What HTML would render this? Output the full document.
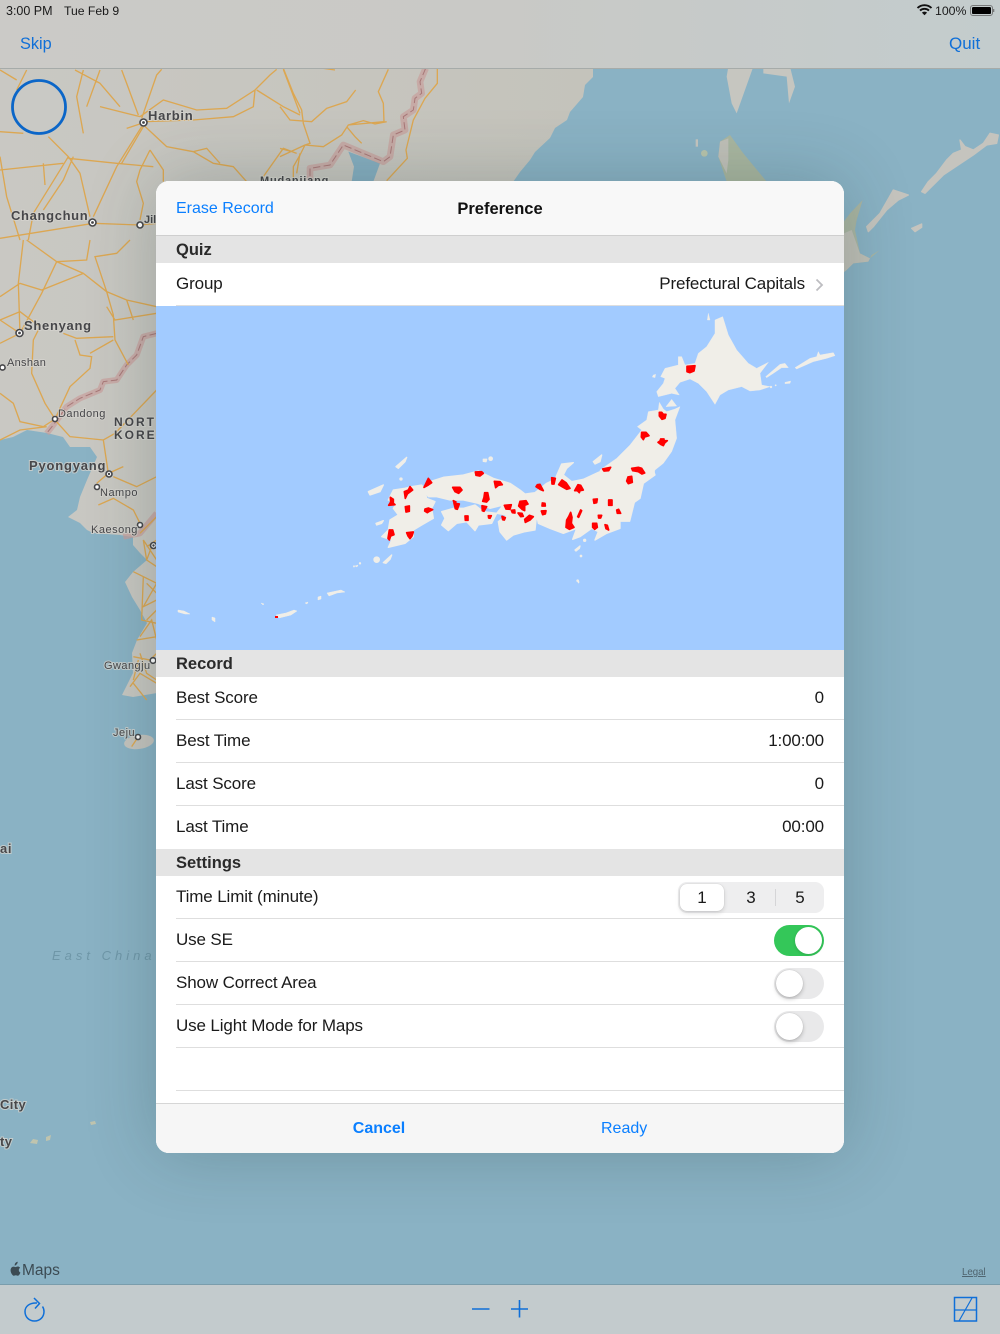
<!DOCTYPE html>
<html><head><meta charset="utf-8"><title>Preference</title>
<style>
html,body{margin:0;padding:0;width:1000px;height:1334px;overflow:hidden;background:#8ab2c4}
body{position:relative;font-family:"Liberation Sans",sans-serif;color:#111}
.a{position:absolute}
.r{position:absolute;left:176px;width:648px;height:42px;line-height:42px;font-size:17px;letter-spacing:-.13px;color:#1a1a1a;white-space:nowrap}
.r b{font-weight:normal;position:absolute;right:0;top:0}
.s{position:absolute;left:156px;padding-left:20px;width:668px;height:27px;line-height:28px;background:#e4e4e4;font-size:16.5px;font-weight:bold;color:#2a2a2a}
.l{position:absolute;left:176px;width:668px;height:1px;background:#dedede}
.tg{position:absolute;left:774px;width:50px;height:31px;border-radius:16px;background:#e9e9ea}
.tg i{position:absolute;left:2px;top:2px;width:27px;height:27px;border-radius:50%;background:#fff;box-shadow:0 2px 4px rgba(0,0,0,.22),0 0 1px rgba(0,0,0,.22)}
.tg.on{background:#34c759}.tg.on i{left:21px;box-shadow:0 1px 3px rgba(0,0,0,.15)}
.n{position:absolute;top:882px;height:31px;line-height:31px;width:44px;text-align:center;font-size:17px;color:#1a1a1a}
svg text.m{font-family:"Liberation Sans",sans-serif;font-weight:bold;fill:#47474a;stroke:#d5d4cf;stroke-width:2px;paint-order:stroke;stroke-opacity:.75}
</style></head><body>

<svg class="a" style="left:0;top:0;filter:blur(.35px)" width="1000" height="1334" viewBox="0 0 1000 1334">
<defs><linearGradient id="ld" x1="0" y1="0" x2="1" y2="0"><stop offset="0" stop-color="#c9c8c3"/><stop offset="1" stop-color="#c4c3bb"/></linearGradient></defs>
<rect width="1000" height="1334" fill="#8ab2c4"/>
<polygon fill="url(#ld)" points="0,60 593,60 593,77 585,85 583,97 570,112 567,120 555,128 550,138 535,152 530,160 520,172 513,182 513,693 157,693 133,697 122,695 133,673 132,653 137,640 147,623 140,610 132,597 125,582 133,572 147,560 140,553 133,545 133,537 120,535 93,533 87,530 80,523 68,517 77,510 80,497 87,480 97,457 90,447 70,447 63,437 47,433 27,430 13,437 0,440"/>
<ellipse cx="139" cy="742" rx="15" ry="7" fill="#c5c4be" transform="rotate(-8 139 742)"/>

<g transform="translate(280,60) scale(.33333)">
<path d="M205 275L300 310L280 365L215 365L222 320Z" fill="#86aec0"/>
<path d="M1345 20L1420 20L1395 90L1370 160L1355 130L1340 50Z M1450 20L1450 40L1520 50L1527 130L1545 80L1535 40L1530 20Z" fill="#c6c6c0"/>
<path d="M1350 225L1390 280L1460 365L1340 365L1315 290L1320 245Z" fill="#a9b6a0"/>
<path d="M1345 235L1320 245L1315 290L1340 340L1345 300Z" fill="#c0c0b8"/>
<ellipse cx="1273" cy="280" rx="10" ry="10" fill="#b8c4ac"/><rect x="1247" y="238" width="7" height="22" fill="#c6c6c0"/>
<path d="M437 25L420 65L425 100L405 115L400 150L370 170L375 210L340 225L330 290L310 305L190 255L150 315L90 325L90 362" fill="none" stroke="#c79c9a" stroke-opacity=".65" stroke-width="20" stroke-linejoin="round"/>
<path d="M437 25L420 65L425 100L405 115L400 150L370 170L375 210L340 225L330 290L310 305L190 255L150 315L90 325L90 362" fill="none" stroke="#a87878" stroke-width="3" stroke-dasharray="22 10"/>
<g fill="none" stroke="#dca752" stroke-width="4">
<path d="M10 25L40 100L65 150L70 190L90 250L75 255L0 290M0 140L30 180L95 185L140 145L200 125L227 90M325 28L295 95L310 130L312 185L205 195L185 225L130 260L75 255M200 200L225 230L245 250M472 25L472 70L435 115L400 180L378 270L382 295L320 362M60 285L75 255M40 362L40 320L60 285M130 25L165 30M0 265L35 275M205 195L250 182L285 192L320 185"/>
</g>
</g>

<g transform="scale(.33333)" fill="none" stroke="#dca752" stroke-width="4">
<path d="M0 210L50 240M80 210L50 270M415 345L380 250L365 210M425 355L470 225L485 208M300 320L420 350M420 350L490 300L590 330L680 325L765 270L810 225L830 208M430 365L580 360L700 350L760 320L765 270M380 385L425 370L500 440L580 455L640 490L700 500L740 545M425 380L350 500L280 650M430 380L365 490M450 450L420 510L410 545L430 610L420 660M450 450L490 510L490 545M225 210L300 250L360 320M250 210L230 290L250 400M300 210L260 320M145 410L205 470L240 520L270 650M205 470L100 640L85 720M205 475L350 490L460 500M0 510L190 490M130 490L135 555M0 470L20 590L60 720M0 395L70 400M0 715L280 670L420 675L470 670M770 270L850 320L900 345M850 208L900 340M580 455L620 445L660 490M790 530L850 445L890 460M890 520L900 460M220 470L190 540L130 630"/>
</g>
<g transform="translate(0,240) scale(.33333)">
<path d="M470 280L430 290L410 345L380 375L350 420L310 425L300 450L240 475L200 500L160 555L140 580M470 820L420 880L370 890" fill="none" stroke="#c79c9a" stroke-opacity=".65" stroke-width="18" stroke-linejoin="round"/>
<path d="M470 280L430 290L410 345L380 375L350 420L310 425L300 450L240 475L200 500L160 555L140 580" fill="none" stroke="#a87878" stroke-width="3" stroke-dasharray="22 10"/>
<g fill="none" stroke="#dca752" stroke-width="4">
<path d="M70 0L55 130L60 280M170 65L125 160L60 280M0 170L60 130L125 150L250 100L320 155L380 180L470 200M80 0L170 65L250 100L320 155L340 225L345 300L385 375M270 0L260 60L170 65M390 0L350 40L285 50L320 155M320 200L345 240L470 220M60 280L0 240L60 215L120 260L100 300L95 400L135 490L165 537M60 280L0 310M190 280L230 295L340 290M225 300L240 345L275 350L270 385L210 440L165 537M340 300L270 340M0 460L40 490L60 545L130 560L165 537M0 600L60 570L140 560M165 540L210 590L310 600L345 580L470 450M310 600L325 700L290 730M325 700L370 680M340 710L410 740L470 710M295 795L340 775L400 810L420 850M380 180L400 240M470 830L420 880M430 900L470 960M440 920L470 900"/>
</g></g>
<g transform="translate(0,540) scale(.33333)" fill="none" stroke="#dca752" stroke-width="4">
<path d="M430 0L440 60L470 80M455 20L440 60M400 95L470 130L430 200L470 180M430 110L425 240L470 250M420 290L455 240L470 300M440 240L470 210M410 300L470 290M400 350L450 360L470 340M420 340L440 400L470 420M390 440L420 400L470 430M400 430L440 480M395 620L415 590M415 360L400 420M440 130L470 160"/>
</g>

<g transform="translate(840,0) scale(.33333)">
<path d="M0 680L30 640L68 600L50 660L45 690L60 760L90 775L120 750L95 765L85 785L40 790L20 810L-5 830Z" fill="#aab5a2"/>
<path d="M0 705L35 690L60 760L90 775L85 785L40 790L20 810L0 825Z" fill="#bfbfb6"/>
<path d="M80 680L120 640L160 570L205 585L175 600L140 630L100 680L85 695Z M245 575L265 545L290 520L320 480L340 460L365 450L360 420L375 440L400 450L430 430L450 400L475 405L470 430L440 435L400 465L355 495L310 525L270 565L255 580Z M215 685L245 672L245 682L225 695Z" fill="#c5c4be" stroke="#c5c4be" stroke-width="4" stroke-linejoin="round"/>
</g>
<path d="M90 1122l5-1 1 3-5 1zM30 1143l3-4 5 1-1 4zM46 1137l5-2-1 5-4 1z" fill="#c0c4ae"/>

<g fill="#fff" stroke="#47474a" stroke-width="1.6">
<circle cx="143.500" cy="122.500" r="3.500"/><circle cx="92.500" cy="222.500" r="3.500"/><circle cx="140" cy="225" r="3"/><circle cx="19.500" cy="333" r="3.500"/><circle cx="2.500" cy="367.500" r="2.600"/><circle cx="55" cy="419" r="2.500"/><circle cx="109" cy="474" r="3"/><circle cx="97" cy="487" r="2.500"/><circle cx="140" cy="525" r="2.500"/><circle cx="153.500" cy="545.500" r="3"/><circle cx="153" cy="660.500" r="2.800"/><circle cx="138" cy="737" r="2.500"/>
</g>
<g fill="#47474a"><circle cx="143.500" cy="122.500" r="1.400"/><circle cx="92.500" cy="222.500" r="1.400"/><circle cx="19.500" cy="333" r="1.400"/><circle cx="109" cy="474" r="1.200"/><circle cx="153.500" cy="545.500" r="1.200"/></g>

<text class="m" x="148" y="120" font-size="13" letter-spacing=".7">Harbin</text>
<text class="m" x="260" y="184" font-size="11" letter-spacing=".8">Mudanjiang</text>
<text class="m" x="11" y="220" font-size="13" letter-spacing=".65">Changchun</text>
<text class="m" x="144" y="223" font-size="11">Jil</text>
<text class="m" x="24" y="330" font-size="13" letter-spacing=".7">Shenyang</text>
<text class="m" x="7" y="366" font-size="11" letter-spacing=".3" style="font-weight:normal">Anshan</text>
<text class="m" x="58" y="417" font-size="11" letter-spacing=".45" style="font-weight:normal">Dandong</text>
<text class="m" x="114" y="426" font-size="12" letter-spacing="2">NORT</text>
<text class="m" x="114" y="439" font-size="12" letter-spacing="2">KORE.</text>
<text class="m" x="29" y="470" font-size="13" letter-spacing=".8">Pyongyang</text>
<text class="m" x="100" y="496" font-size="11" letter-spacing=".5" style="font-weight:normal">Nampo</text>
<text class="m" x="91" y="533" font-size="11" letter-spacing=".5" style="font-weight:normal">Kaesong</text>
<text class="m" x="104" y="669" font-size="11" letter-spacing=".45" style="font-weight:normal">Gwangju</text>
<text class="m" x="113" y="736" font-size="11" letter-spacing=".5" style="font-weight:normal">Jeju</text>
<text class="m" x="0" y="853" font-size="13" letter-spacing=".6">ai</text>
<text x="52" y="960" font-size="13" font-style="italic" letter-spacing="4" fill="#6f97a8" font-family="Liberation Sans">East China</text>
<text class="m" x="0" y="1109" font-size="13" letter-spacing=".4">City</text>
<text class="m" x="0" y="1146" font-size="13" letter-spacing=".4">ty</text>

<path d="M16.500 1264.500c.8-.9 1.300-1.700 1.200-2.800-1 .1-2 .7-2.500 1.600-.4.800-.6 1.400-.5 2.300.7 0 1.300-.4 1.800-1.100zM18.800 1270c0-1.500 1.200-2.200 1.300-2.300-.7-1-1.800-1.200-2.200-1.200-.9-.1-1.800.6-2.300.6s-1.200-.5-2-.5c-1 0-2 .6-2.500 1.500-1.100 1.900-.3 4.600.8 6.100.5.700 1.100 1.500 1.900 1.500.8 0 1.100-.5 2-.5s1.200.5 2 .5 1.300-.7 1.800-1.500c.6-.8.800-1.600.8-1.700 0 0-1.600-.6-1.600-2.500z" fill="#3c4b53"/>
<text x="22" y="1275" font-size="15.500" fill="#3c4b53" font-family="Liberation Sans">Maps</text>
<text x="962" y="1275" font-size="9.700" fill="#4e636d" text-decoration="underline" font-family="Liberation Sans">Legal</text>
</svg>

<!-- top bar -->
<div class="a" style="left:0;top:0;width:1000px;height:68px;background:linear-gradient(90deg,#cbcac7 0,#c9c9c6 50%,#c3cccd 100%);border-bottom:1px solid #a6aba9"></div>
<div class="a" style="left:6px;top:3px;font-size:12.500px;line-height:16px;color:#1a1a1a;white-space:nowrap">3:00 PM</div>
<div class="a" style="left:64px;top:3px;font-size:12.200px;line-height:16px;color:#1a1a1a;white-space:nowrap">Tue Feb 9</div>
<div class="a" style="left:935px;top:3px;font-size:12.300px;line-height:16px;color:#1a1a1a;white-space:nowrap">100%</div>
<svg class="a" style="left:915px;top:3px" width="80" height="14" viewBox="0 0 80 14">
<path d="M2.500 5A10 10 0 0 1 16.500 5M5 7.600A6.500 6.500 0 0 1 14 7.600" fill="none" stroke="#111" stroke-width="1.900"/><path d="M6.900 9.600A3.800 3.800 0 0 1 12.100 9.600L9.500 12.300Z" fill="#111"/>
<rect x="55.500" y="2.500" width="22" height="10" rx="2.500" fill="none" stroke="#77797a"/><rect x="57" y="4" width="19" height="7" rx="1.300" fill="#000"/><rect x="78" y="6" width="1.300" height="3" fill="#77797a"/>
</svg>
<div class="a" style="left:20px;top:34px;font-size:16.300px;line-height:20px;color:#0f6fd8">Skip</div>
<div class="a" style="left:949px;top:34px;font-size:17px;line-height:20px;color:#0f6fd8">Quit</div>
<svg class="a" style="left:8px;top:76px" width="62" height="62"><circle cx="31" cy="31" r="26.500" fill="#c9c9c5" stroke="#0b66c8" stroke-width="2.800"/></svg>

<!-- bottom bar -->
<div class="a" style="left:0;top:1284px;width:1000px;height:50px;background:#c3cbcd;border-top:1px solid #7a9dac;box-sizing:border-box"></div>
<svg class="a" style="left:0;top:1285px" width="1000" height="49" viewBox="0 1285 1000 49" fill="none" stroke="#0f6fd8">
<path d="M37 1303C29.500 1302.500 25 1306.500 25 1311.500C25 1317 29 1321 34.500 1321C40 1321 44 1317 44 1311.500C44 1309.500 43.500 1308 42.500 1306.500" stroke-width="1.500"/>
<path d="M34 1298L39.500 1303.500L35 1308.500" stroke-width="1.500"/>
<path d="M472 1309H489.500M511 1309H528M519.500 1300V1317.500" stroke-width="1.600"/>
<rect x="954.500" y="1297.500" width="22" height="23.500" stroke-width="1.500"/>
<path d="M955 1310H976M972 1298L959 1321" stroke-width="1.200"/>
</svg>

<!-- modal -->
<div class="a" style="left:156px;top:181px;width:688px;height:972px;border-radius:13px;background:#fff;box-shadow:0 0 70px rgba(20,50,50,.24)"></div>
<div class="a" style="left:156px;top:181px;width:688px;height:972px;border-radius:13px;overflow:hidden;background:#fff">
<div class="a" style="left:0;top:0;width:688px;height:54px;background:#f8f8f8;border-bottom:1px solid #cfcfcf"></div>
<div class="a" style="left:0;bottom:0;width:688px;height:49px;background:#f6f6f6;border-top:1px solid #d6d6d6"></div>
</div>
<div class="a" style="left:176px;top:199px;font-size:16px;line-height:20px;color:#0a7fff;white-space:nowrap">Erase Record</div>
<div class="a" style="left:156px;top:199px;width:688px;text-align:center;font-size:16.500px;line-height:20px;font-weight:bold;color:#111">Preference</div>

<div class="s" style="top:236px">Quiz</div>
<div class="r" style="top:263px">Group<b style="right:19px">Prefectural Capitals</b></div>
<svg class="a" style="left:815px;top:278px" width="10" height="14"><path d="M1.500 1.500L7 7L1.500 12.500" fill="none" stroke="#bdbdc1" stroke-width="1.800"/></svg>
<div class="l" style="top:305px"></div>

<svg class="a" style="left:156px;top:306px;filter:blur(.3px)" width="688" height="344" viewBox="156 306 688 344">
<rect x="150" y="300" width="700" height="356" fill="#a2cbff"/>
<g fill="#f0eee8" stroke="#f0eee8" stroke-width="1.200" stroke-linejoin="round">
<g transform="translate(600,305) scale(.33333)">
<path d="M345 45L368 35L385 90L410 135L445 175L470 190L505 172L480 205L485 240L510 245L480 255L450 258L425 245L385 255L360 270L345 298L320 260L295 235L270 222L240 232L225 250L238 270L215 265L175 275L170 260L190 235L195 220L182 215L195 190L235 180L235 155L245 155L255 180L285 175L295 145L320 125L345 85Z"/>
<path d="M497 215L540 178L555 175L565 188L545 188L520 205L500 218ZM585 188L630 160L650 155L655 140L660 150L700 143L705 152L680 160L640 170L590 192ZM555 232L572 228L570 235L555 236ZM325 25L330 45L322 45ZM160 210L167 208L165 218L157 216Z"/>
<circle cx="513" cy="246" r="3"/><circle cx="527" cy="241" r="2"/>
<path d="M0 495L50 460L90 420L125 375L112 365L140 345L145 320L175 315L178 292L190 312L200 320L225 312L240 305L225 345L230 400L215 440L190 475L165 495L160 515L125 520L120 560L105 590L90 650L0 650Z"/>
<path d="M198 305L215 283L230 303Z"/>
</g>
<g transform="translate(350,440) scale(.33333)" stroke-width="4">
<path d="M222 150L240 125L280 112L340 105L385 93L430 115L480 130L510 150L525 162L555 158L590 130L615 118L625 95L635 72L670 68L650 85L640 105L665 125L700 118L745 97L790 80L850 60L900 60L915 105L880 130L870 175L835 200L810 225L810 265L770 280L735 300L745 275L725 265L690 290L668 298L680 265L640 280L600 265L565 250L560 225L555 270L525 275L490 285L470 300L450 275L445 245L470 225L440 220L460 195L420 205L385 190L340 180L300 180L260 170L235 170Z"/>
<path d="M275 215L310 205L340 205L375 195L400 215L425 218L440 220L425 250L385 255L375 272L350 245L320 250L295 272L275 255L285 235Z"/>
<path d="M185 140L215 135L225 150L230 175L255 185L245 205L250 235L215 255L190 270L190 290L165 310L115 322L125 300L95 290L115 270L120 240L145 225L130 205L140 190L115 180L130 150L165 145Z"/>
<path d="M138 80L170 52L165 65L145 85ZM55 155L100 135L90 155L60 165ZM100 368L125 345L120 358L108 370ZM730 65L755 45L750 65L735 72ZM78 250L100 242L95 250L80 255ZM400 58L410 58L408 65L400 64Z"/>
<circle cx="80" cy="359" r="8"/><circle cx="422" cy="56" r="5"/><circle cx="153" cy="117" r="3"/><circle cx="704" cy="301" r="3"/><circle cx="683" cy="422" r="2"/><circle cx="693" cy="348" r="2"/><circle cx="30" cy="370" r="1.500"/><circle cx="12" cy="379" r="1"/>
<path d="M675 330L690 318L688 325L678 333Z"/>
</g>
<path d="M178 610l6 1 6 3-5 0-7-2zM212 617l3 1 0 4-3-2zM261 603l3 1-1 1zM276 615l10-2 8-3 3 1-6 4-12 3zM318 597l3-1 0 3-3 1zM327 593l14-3 4 2-8 1-8 3zM355 566l3-1-1 2zM305 603l3-1-1 2zM578 581h1v2h-1z" stroke-width=".5"/>
</g>
<path d="M275 616l3 0 0 2-3 0z" fill="#f00"/>
<g fill="#f00" stroke="#f00" stroke-width="5" stroke-linejoin="round">
<g transform="translate(600,305) scale(.33333)">
<path d="M261 184L285 182L282 198L270 203L261 200Z"/>
<path d="M178 322L185 322L190 328L198 328L195 340L186 343L178 333Z"/>
<path d="M125 382L138 382L147 392L134 396L130 404L124 396Z"/>
<path d="M182 402L192 402L192 407L202 407L194 414L190 422L182 418L174 412L180 408Z"/>
<path d="M84 516L95 514L97 532L85 536L80 528Z"/>
<path d="M95 490L115 487L125 490L134 504L126 507L115 500L98 497Z"/>
<path d="M8 492L32 487L26 497L12 498Z"/>
</g>
<g transform="translate(350,440) scale(.33333)">
<path d="M376 96L395 95L400 100L390 108L378 106Z"/>
<path d="M433 124L450 125L457 134L445 136L437 143Z"/>
<path d="M308 142L330 142L336 150L326 160L315 155Z"/>
<path d="M404 158L413 158L417 178L410 186L398 184L402 172Z"/>
<path d="M235 115L245 128L235 135L222 142Z"/>
<path d="M163 155L175 150L180 140L188 150L172 162L166 175Z"/>
<path d="M121 172L130 178L130 190L135 194L116 196L122 186Z"/>
<path d="M166 200L178 198L178 214L168 216Z"/>
<path d="M225 207L235 204L248 209L238 214L232 218L224 213Z"/>
<path d="M312 190L328 192L322 208L316 206Z"/>
<path d="M396 197L410 200L402 214L397 212Z"/>
<path d="M345 228L354 228L354 241L346 241Z"/>
<path d="M415 227L424 227L420 235L416 234Z"/>
<path d="M456 229L466 233L463 240L458 239Z"/>
<path d="M463 196L484 194L480 208L468 207Z"/>
<path d="M510 184L528 182L534 192L524 196L524 212L516 208L506 198Z"/>
<path d="M484 211L494 210L495 219L487 218Z"/>
<path d="M504 219L516 220L520 229L512 230Z"/>
<path d="M538 226L550 230L540 240L526 247L524 238Z"/>
<path d="M577 189L585 190L586 198L576 198Z"/>
<path d="M574 213L588 212L586 222L578 224Z"/>
<path d="M562 134L570 133L580 152L570 148L558 140Z"/>
<path d="M605 113L616 115L612 132L606 132Z"/>
<path d="M636 120L648 128L660 145L650 148L636 140L626 134Z"/>
<path d="M684 134L692 136L700 150L690 152L688 158L682 152L674 152Z"/>
<path d="M730 178L742 177L740 188L732 190Z"/>
<path d="M776 180L786 180L786 196L776 196Z"/>
<path d="M800 210L806 208L812 220L802 220Z"/>
<path d="M745 226L755 226L752 234L746 234Z"/>
<path d="M728 250L740 250L742 262L734 268L728 262Z"/>
<path d="M765 254L772 256L776 270L768 266Z"/>
<path d="M692 210L695 212L686 232L683 230Z"/>
<path d="M662 217L666 232L664 250L672 262L658 268L648 262L650 240L656 230Z"/>
<path d="M118 270L128 270L132 284L122 288L118 300L114 295Z"/>
<path d="M170 278L190 276L186 288L180 296L174 288Z"/>
<path d="M310 182L318 186L312 188Z"/>
</g>
</g>
</svg>

<div class="s" style="top:650px">Record</div>
<div class="r" style="top:677px">Best Score<b>0</b></div><div class="l" style="top:719px"></div>
<div class="r" style="top:720px">Best Time<b>1:00:00</b></div><div class="l" style="top:762px"></div>
<div class="r" style="top:763px">Last Score<b>0</b></div><div class="l" style="top:805px"></div>
<div class="r" style="top:806px">Last Time<b>00:00</b></div>
<div class="s" style="top:849px">Settings</div>
<div class="r" style="top:876px">Time Limit (minute)</div><div class="l" style="top:918px"></div>
<div class="r" style="top:919px">Use SE</div><div class="l" style="top:961px"></div>
<div class="r" style="top:962px">Show Correct Area</div><div class="l" style="top:1004px"></div>
<div class="r" style="top:1005px">Use Light Mode for Maps</div><div class="l" style="top:1047px"></div>
<div class="l" style="top:1090px"></div>

<div class="a" style="left:678px;top:882px;width:146px;height:31px;border-radius:9px;background:#eeeeef"></div>
<div class="a" style="left:680px;top:884px;width:44px;height:27px;border-radius:7px;background:#fff;box-shadow:0 2px 5px rgba(0,0,0,.14),0 0 1px rgba(0,0,0,.2)"></div>
<div class="a" style="left:775px;top:889px;width:1px;height:17px;background:#d5d5d7"></div>
<div class="n" style="left:680px">1</div><div class="n" style="left:729px">3</div><div class="n" style="left:778px">5</div>

<div class="tg on" style="top:925px"><i></i></div>
<div class="tg" style="top:968px"><i></i></div>
<div class="tg" style="top:1011px"><i></i></div>

<div class="a" style="left:156px;top:1119px;width:446px;text-align:center;font-size:16px;line-height:20px;font-weight:bold;color:#0a7fff">Cancel</div>
<div class="a" style="left:601px;top:1119px;font-size:16px;line-height:20px;color:#0a7fff">Ready</div>
</body></html>
